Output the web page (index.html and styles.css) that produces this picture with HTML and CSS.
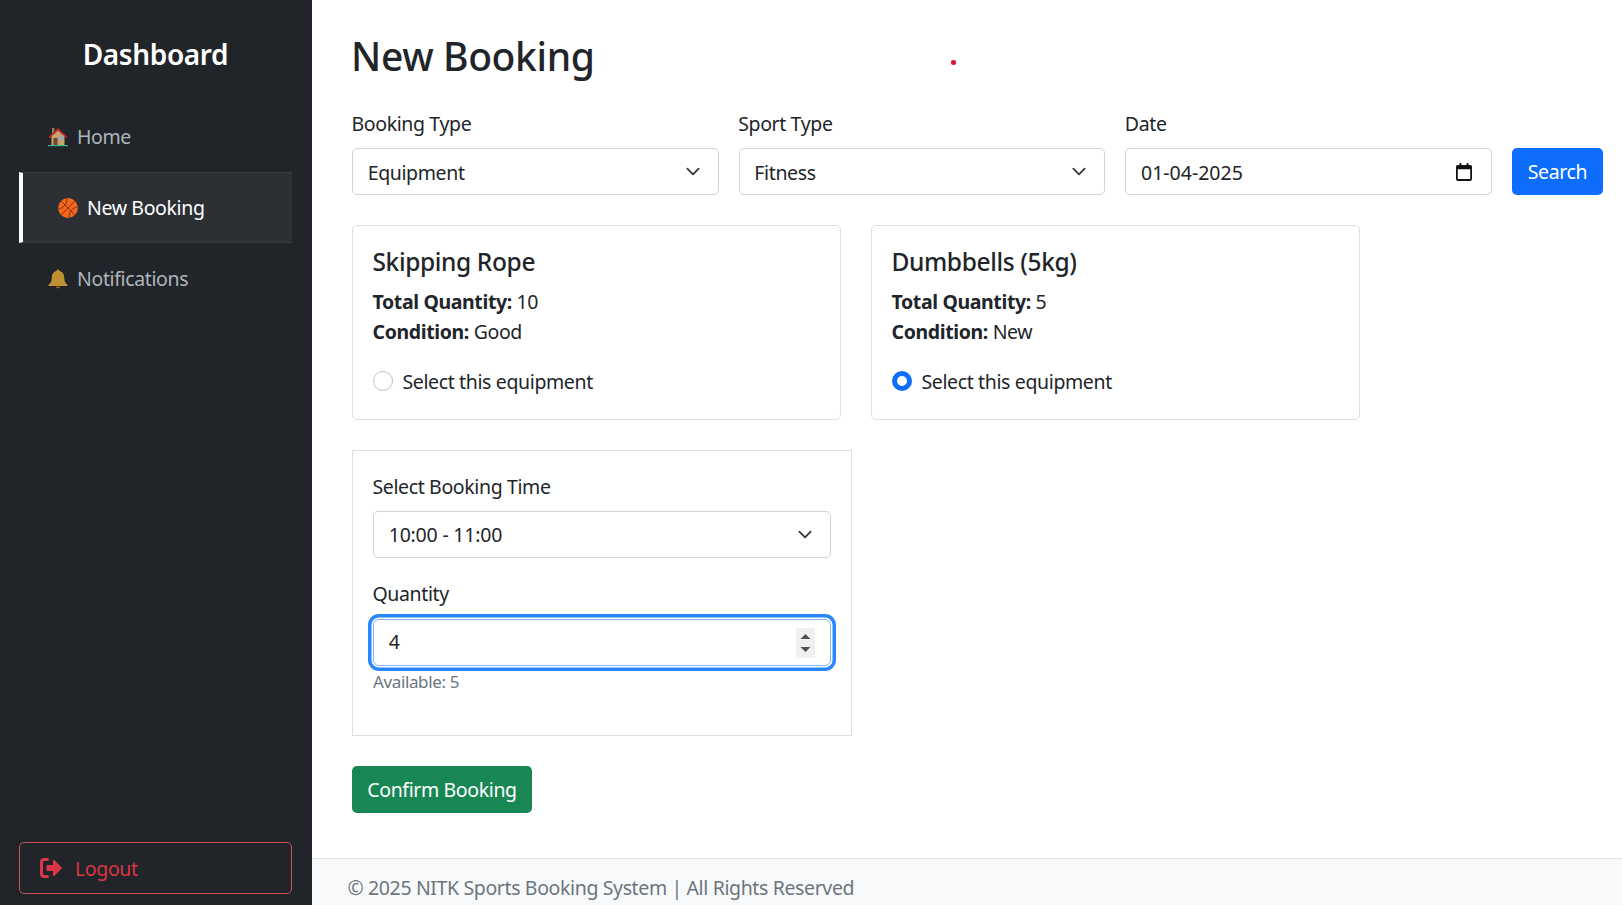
FILE: index.html
```html
<!DOCTYPE html>
<html>
<head>
	<meta charset="utf-8">
	<meta name="viewport" content="width=device-width, initial-scale=1">
	<title>New Booking</title>
	<link rel="stylesheet" href="styles.css">
</head>
<body>

<aside class="sidebar">
	<h4 class="brand">Dashboard</h4>
	<ul class="nav">
		<li>
			<a href="#" class="nav-link">
				<svg class="emoji" viewBox="0 0 20 20">
					<rect x="4" y="1" width="2.5" height="5.500" fill="#9b7a5a"/>
					<rect x="3.500" y="8" width="13" height="10" fill="#c9a26d"/>
					<path d="M10 1 .5 10l1.200 1.200L10 3.500l8.300 7.700 1.200-1.200z" fill="#c1272d"/>
					<path d="M10 3.500 3.500 9.500h13z" fill="#c9a26d"/>
					<rect x="5.500" y="11" width="4" height="7" fill="#6d4534"/>
					<rect x="11.500" y="9.500" width="3.500" height="3.500" fill="#7fb0d6"/>
					<rect x="0" y="18" width="20" height="1.200" fill="#3bb58a"/>
				</svg>
				Home
			</a>
		</li>
		<li>
			<a href="#" class="nav-link active">
				<svg class="emoji" viewBox="0 0 20 20">
					<circle cx="10" cy="10" r="9.900" fill="#f4671f"/>
					<g fill="none" stroke="#7a2c0a" stroke-width="0.9">
						<path d="M3 3.200 17 16.800"/>
						<path d="M16.800 3 3.200 17"/>
						<path d="M8.500 0.500C9.500 5 7 9 1 11"/>
						<path d="M19 9C13.500 10.500 10.500 14 11.500 19.500"/>
					</g>
				</svg>
				New Booking
			</a>
		</li>
		<li>
			<a href="#" class="nav-link">
				<svg class="emoji" viewBox="0 0 20 20">
					<path d="M10 .5c.9 0 1.500.6 1.500 1.400 3.200.7 4.700 3.300 4.700 6.600 0 3.400 1 5.600 3.300 7.200v1.300H.5v-1.300c2.300-1.600 3.300-3.800 3.300-7.200 0-3.300 1.500-5.900 4.700-6.600C8.500 1.100 9.100.5 10 .5z" fill="#be9233"/>
					<path d="M8 17.500h4c0 1.100-.9 1.800-2 1.800s-2-.7-2-1.800z" fill="#a8642a"/>
				</svg>
				Notifications
			</a>
		</li>
	</ul>
	<a href="#" class="logout">
		<svg class="logout-icon" viewBox="0 0 22 20">
			<path d="M7.500 1.500H4.200C2.400 1.500 1.500 2.600 1.500 4.200v11.600c0 1.600.9 2.700 2.700 2.700h3.300" fill="none" stroke="#dc3545" stroke-width="3" stroke-linecap="round"/>
			<path d="M13 2.800c0-.8.9-1.200 1.500-.6l7 7.100c.4.400.4 1 0 1.400l-7 7.100c-.6.600-1.500.2-1.500-.6V13H7.500c-.6 0-1-.4-1-1V8c0-.6.4-1 1-1H13z" fill="#dc3545"/>
		</svg>
		<span class="logout-text">Logout</span>
	</a>
</aside>

<div class="page">
	<main class="content">
		<h2 class="title">New Booking</h2>

		<form class="filters">
			<div class="field">
				<label for="bookingType">Booking Type</label>
				<select id="bookingType" class="control select">
					<option>Equipment</option>
				</select>
			</div>
			<div class="field">
				<label for="sportType">Sport Type</label>
				<select id="sportType" class="control select">
					<option>Fitness</option>
				</select>
			</div>
			<div class="field">
				<label for="date">Date</label>
				<input type="text" id="date" class="control date" value="01-04-2025">
			</div>
			<button type="button" class="btn btn-primary btn-search">Search</button>
		</form>

		<div class="cards">
			<div class="card">
				<h5>Skipping Rope</h5>
				<p><strong>Total Quantity:</strong> 10</p>
				<p><strong>Condition:</strong> Good</p>
				<label class="check"><input type="radio" name="equipment"> Select this equipment</label>
			</div>
			<div class="card">
				<h5>Dumbbells (5kg)</h5>
				<p><strong>Total Quantity:</strong> 5</p>
				<p><strong>Condition:</strong> New</p>
				<label class="check"><input type="radio" name="equipment" checked> Select this equipment</label>
			</div>
		</div>

		<div class="time-card">
			<label for="time" class="time-label">Select Booking Time</label>
			<select id="time" class="control select time-select">
				<option>10:00 - 11:00</option>
			</select>
			<label for="qty" class="qty-label">Quantity</label>
			<div class="qty-wrap">
				<input type="text" id="qty" class="control focused" value="4">
				<span class="spinner">
					<svg viewBox="0 0 19 30">
						<path d="M9.500 6 14.500 11H4.500z" fill="#505050"/>
						<path d="M9.500 24 14.500 19H4.500z" fill="#505050"/>
					</svg>
				</span>
			</div>
			<small class="hint">Available: 5</small>
		</div>

		<button type="button" class="btn btn-success btn-confirm">Confirm Booking</button>
	</main>

	<footer class="footer">© 2025 NITK Sports Booking System | All Rights Reserved</footer>
</div>

<span class="red-dot"></span>

</body>
</html>
```

FILE: styles.css
```css
* {
	box-sizing: border-box;
	margin: 0;
	padding: 0;
}
html, body {
	height: 100%;
	overflow: hidden;
}
body {
	display: flex;
	font-family: "Noto Sans", sans-serif;
	font-size: 19.5px;
	letter-spacing: -0.019em;
	line-height: 30px;
	color: #212529;
	background: #fff;
}
a {
	text-decoration: none;
}

/* sidebar */
.sidebar {
	width: 312px;
	flex-shrink: 0;
	background: #212529;
	padding: 20px 20px 11px 19px;
	display: flex;
	flex-direction: column;
}
.brand {
	color: #fff;
	font-size: 28px;
	font-weight: 600;
	line-height: 36px;
	text-align: center;
	margin: 16px 0 29px;
}
.nav {
	list-style: none;
}
.nav-link {
	display: flex;
	align-items: center;
	gap: 9px;
	height: 71px;
	padding-left: 29px;
	color: #adb5bd;
}
.nav-link.active {
	color: #fff;
	background: #2c2f34;
	border-top: 1px solid #373a3f;
	border-bottom: 1px solid #373a3f;
	border-left: 4px solid #fff;
	padding-left: 35px;
}
.emoji {
	width: 20px;
	height: 20px;
	flex-shrink: 0;
}
.logout {
	margin-top: auto;
	height: 52px;
	display: flex;
	align-items: center;
	gap: 13px;
	padding-left: 20px;
	color: #dc3545;
	border: 1px solid #c8535d;
	border-radius: 5px;
}
.logout-icon {
	width: 22px;
	height: 20px;
}
.logout-text {
	padding-top: 2px;
}

/* main */
.page {
	flex: 1;
	min-width: 0;
	display: flex;
	flex-direction: column;
}
.content {
	flex: 1;
	padding: 32px 19px 0 40px;
}
.title {
	font-size: 39px;
	font-weight: 500;
	line-height: 48px;
	margin: 0 0 28px -1px;
}
label {
	display: block;
	padding-top: 1px;
	margin: 0 0 9px -0.5px;
}
.filters {
	display: flex;
	align-items: flex-end;
	gap: 20px;
	margin-bottom: 30px;
}
.field {
	flex: 1;
}
.control {
	display: block;
	width: 100%;
	height: 47px;
	padding: 2px 19px 0 14.7px;
	font: inherit;
	letter-spacing: inherit;
	color: #212529;
	background-color: #fff;
	border: 1px solid #ced4da;
	border-radius: 5px;
	outline: none;
}
.select {
	appearance: none;
	background-image: url("data:image/svg+xml,%3csvg xmlns='http://www.w3.org/2000/svg' viewBox='0 0 16 16'%3e%3cpath fill='none' stroke='%23343a40' stroke-linecap='round' stroke-linejoin='round' stroke-width='2' d='m2 5 6 6 6-6'/%3e%3c/svg%3e");
	background-repeat: no-repeat;
	background-position: right 15px center;
	background-size: 20px 15px;
}
.date {
	letter-spacing: 0;
	background-image: url("data:image/svg+xml,%3csvg xmlns='http://www.w3.org/2000/svg' viewBox='0 0 18 20'%3e%3cpath fill='%23111' d='M4 0h2v2h6V0h2v2h2a2 2 0 0 1 2 2v14a2 2 0 0 1-2 2H2a2 2 0 0 1-2-2V4a2 2 0 0 1 2-2h2zM2 7v11h14V7z'/%3e%3c/svg%3e");
	background-repeat: no-repeat;
	background-position: right 19px center;
	background-size: 16px 18px;
}
.btn {
	height: 47px;
	font: inherit;
	letter-spacing: inherit;
	color: #fff;
	border: none;
	border-radius: 5px;
	cursor: pointer;
}
.btn-primary {
	background: #0d6efd;
}
.btn-success {
	background: #198754;
}
.btn-search {
	width: 91px;
}
.btn-confirm {
	width: 180px;
}

/* cards */
.cards {
	display: flex;
	gap: 30px;
	margin-bottom: 30px;
}
.card {
	width: 489px;
	height: 195px;
	padding: 20px 20px 20px 19.5px;
	border: 1px solid #dfdfdf;
	border-radius: 5px;
}
.card h5 {
	font-size: 24.5px;
	font-weight: 500;
	line-height: 30px;
	margin: 1px 0 10px;
}
.card strong {
	font-weight: 700;
}
.check {
	display: flex;
	align-items: center;
	gap: 10px;
	padding-top: 0;
	margin: 20px 0 0;
}
.check input {
	appearance: none;
	width: 20px;
	height: 20px;
	margin-bottom: 2px;
	border: 1px solid #bcc2c8;
	border-radius: 50%;
	background: #fff;
}
.check input:checked {
	border: 5px solid #0d6efd;
}
.time-card {
	width: 500px;
	height: 286px;
	padding: 20px;
	border: 1px solid #dfdfdf;
	margin-bottom: 30px;
}
.time-select {
	padding-top: 0;
	letter-spacing: -0.2px;
}
.qty-label {
	padding-top: 0;
	margin: 21px 0 10px -0.5px;
}
.qty-wrap {
	position: relative;
}
.focused {
	padding-top: 0;
	padding-bottom: 2px;
	border-color: #86b7fe;
	box-shadow: 0 0 0 1.5px #fff, 0 0 0 5px #2a87ff;
	border-radius: 6px;
}
.spinner {
	position: absolute;
	right: 16px;
	top: 9px;
	width: 19px;
	height: 30px;
	background: #f0f0f0;
}
.spinner svg {
	display: block;
	width: 19px;
	height: 30px;
}
.hint {
	display: block;
	margin-top: 3px;
	font-size: 17px;
	line-height: 26px;
	color: #6c757d;
}

/* footer */
.footer {
	height: 47px;
	padding: 14px 0 0 35.5px;
	color: #6c757d;
	background: #f8f9fa;
	border-top: 1px solid #dee2e6;
}

/* stray mark over the page */
.red-dot {
	position: absolute;
	left: 951px;
	top: 60px;
	width: 4.5px;
	height: 4.5px;
	border-radius: 50%;
	background: #e0102a;
}
```
